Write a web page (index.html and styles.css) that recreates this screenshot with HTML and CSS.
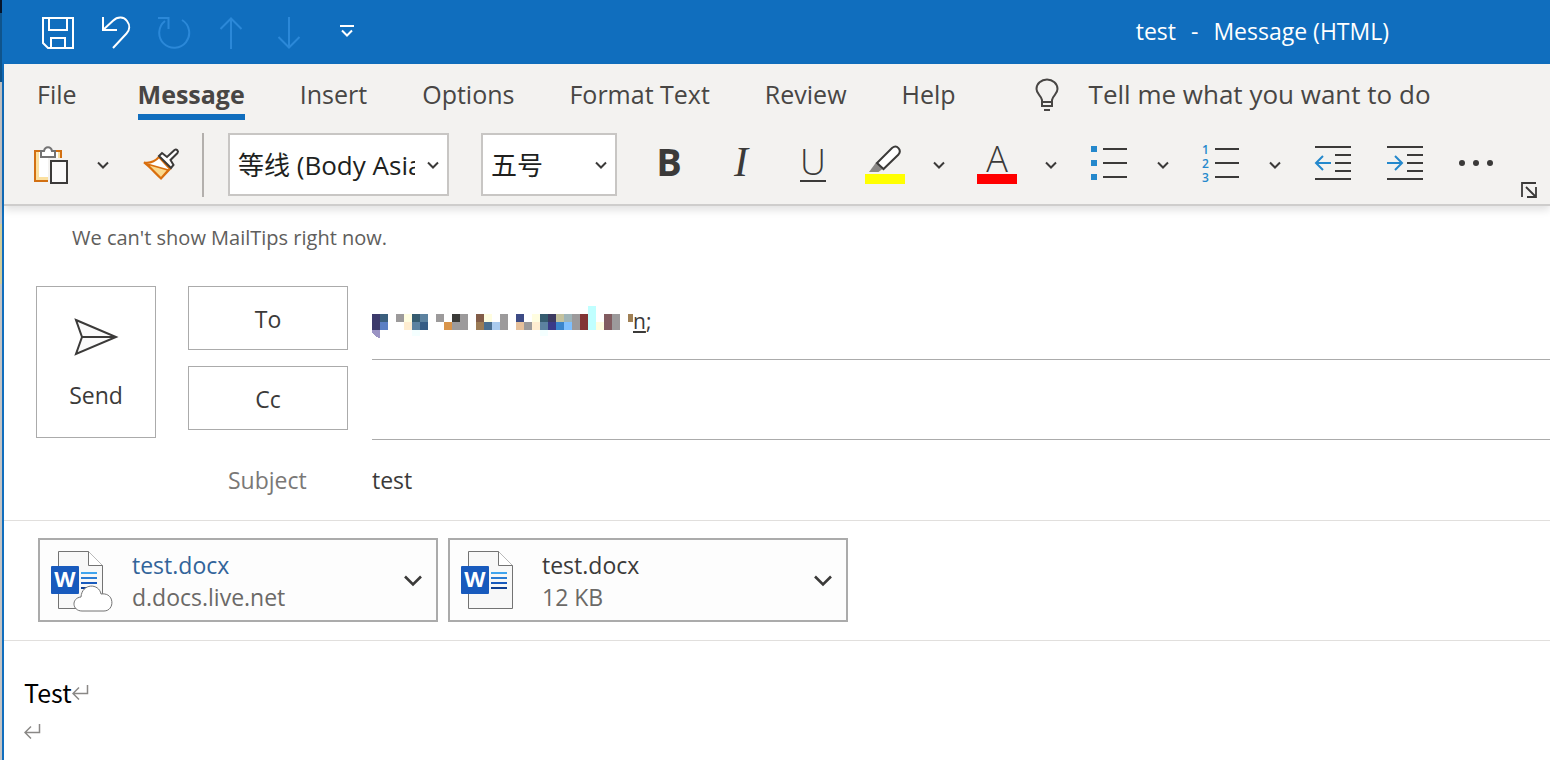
FILE: index.html
```html
<!DOCTYPE html>
<html lang="en">
<head>
<meta charset="utf-8">
<title>test - Message (HTML)</title>
<link rel="stylesheet" href="styles.css">
</head>
<body>
<svg class="defs" aria-hidden="true">
  <symbol id="chevron" viewBox="0 0 12 8"><path d="M1 1.5l5 5 5-5" fill="none" stroke="currentColor" stroke-width="2"/></symbol>
  <symbol id="chevron-lg" viewBox="0 0 18 12"><path d="M1 1.5l8 8 8-8" fill="none" stroke="currentColor" stroke-width="2.6"/></symbol>
  <symbol id="return" viewBox="0 0 17 16"><path d="M15.5 1v8.500H1.500M7 3.500l-6 6 6 6" fill="none" stroke="currentColor" stroke-width="1.500"/></symbol>
  <symbol id="word" viewBox="0 0 62 62">
    <path d="M7.500 1.500h30l14 14v43h-44z" fill="#f8f8f8" stroke="#737373"/>
    <path d="M37.500 1.500v14h14" fill="#fff" stroke="#737373"/>
    <path d="M30 23h16" stroke="#41a5ee" stroke-width="2"/><path d="M30 28h16" stroke="#2b7cd3" stroke-width="2"/><path d="M30 33h16" stroke="#185abd" stroke-width="2"/><path d="M30 38h16" stroke="#103f91" stroke-width="2"/>
    <rect y="16" width="28" height="28" rx="1" fill="#185abd"/>
  </symbol>
</svg>
<div class="screen">
<div class="backdrop"></div>
<div class="window">
  <header class="titlebar">
    <div class="quick">
      <button aria-label="Save"><svg width="34" height="34" viewBox="0 0 34 34"><path d="M2 2h30v30H7l-5-5zM8 2v12h18V2M10 32V22h14v10" class="line"/></svg></button>
      <button aria-label="Undo"><svg width="34" height="34" viewBox="0 0 34 34"><path d="M4 1v13h14M4 14L14 4.800C19 0 25 1 28 5s3 9-.5 12.500L14 32" class="line"/></svg></button>
      <button aria-label="Redo" disabled><svg width="34" height="34" viewBox="0 0 34 34"><path d="M1 2h10.500v11M8 5A15 15 0 1 0 25 4" class="line"/></svg></button>
      <button aria-label="Previous item" disabled><svg width="34" height="34" viewBox="0 0 34 34"><path d="M16 33V2M5.500 13L16 2.500 26.500 13" class="line"/></svg></button>
      <button aria-label="Next item" disabled><svg width="34" height="34" viewBox="0 0 34 34"><path d="M16 1v31M5.500 21L16 31.500 26.500 21" class="line"/></svg></button>
      <button aria-label="Customize quick access"><svg width="34" height="34" viewBox="0 0 34 34"><path d="M9 10h14M11 14.500l5 5 5-5" class="line"/></svg></button>
    </div>
    <h1 class="title"><span>test</span><span>-</span><span>Message (HTML)</span></h1>
  </header>

  <section class="ribbon">
    <nav class="tabs">
      <button class="file-tab">File</button>
      <button class="active">Message</button>
      <button>Insert</button>
      <button>Options</button>
      <button>Format Text</button>
      <button>Review</button>
      <button>Help</button>
      <button class="tell"><svg width="24" height="34" viewBox="0 0 24 34"><path d="M7 25v-3C6 17 1.500 16 1.500 11a10.500 9.500 0 0 1 21 0C22.500 16 18 17 17 22v6H7v-4h10M9 32h6" fill="none" stroke="currentColor" stroke-width="2"/></svg>Tell me what you want to do</button>
    </nav>
    <div class="tools">
      <button class="tool paste" aria-label="Paste"><svg width="40" height="64" viewBox="0 0 40 64"><path d="M4 18h26v30H4z" fill="#fff" stroke="#d27012" stroke-width="2"/><path d="M6.500 19v26.500H19" fill="none" stroke="#fbe0a0" stroke-width="3"/><path d="M28 19v6" stroke="#fbe0a0" stroke-width="2"/><path d="M10 24v-6h3c1-5 7-5 8 0h3v6z" fill="#fff" stroke="#737373" stroke-width="2"/><path d="M20 28h16v22H20z" fill="#fafafa" stroke="#f3f2f0" stroke-width="6"/><path d="M20 28h16v22H20z" fill="#fafafa" stroke="#3b3a39" stroke-width="2"/></svg></button>
      <button class="drop" aria-label="Paste options"><svg width="12" height="8"><use href="#chevron"/></svg></button>
      <button class="tool gap" aria-label="Format painter"><svg width="40" height="64" viewBox="0 0 40 64"><path d="M3 29.500c6 1 11-1 15-5.500l11 12-9 9.500C15 41 9 34 3 29.500z" fill="#fff" stroke="#d96f0e" stroke-width="2"/><path d="M6 31l21 6-7 8z" fill="#fbd98c" stroke="#d96f0e" stroke-width="1.500"/><path d="M18 23l3-3 5 4 7.500-7c2-1.500 4.500 1 3 3L29.500 27l3 5-2.500 3z" fill="#fff" stroke="#3b3a39" stroke-width="2"/></svg></button>
      <span class="separator"></span>
      <label class="combo font"><select aria-label="Font"><option>等线 (Body Asian)</option></select><svg width="12" height="8"><use href="#chevron"/></svg></label>
      <label class="combo size"><select aria-label="Font size"><option>五号</option></select><svg width="12" height="8"><use href="#chevron"/></svg></label>
      <button class="tool letter bold" aria-label="Bold">B</button>
      <button class="tool letter italic" aria-label="Italic">I</button>
      <button class="tool letter under" aria-label="Underline"><span>U</span></button>
      <button class="tool" aria-label="Highlight color"><svg width="40" height="64" viewBox="0 0 40 64"><path d="M4 39l7-9.500 6.500 6.500-4 3z" fill="#8a8886"/><path d="M12 30L27 15c5-4 10 2 6.500 6.500L18.500 36z" fill="#fff" stroke="#3b3a39" stroke-width="2"/><path d="M0 41h40v10H0z" fill="#ff0"/></svg></button>
      <button class="drop" aria-label="Highlight options"><svg width="12" height="8"><use href="#chevron"/></svg></button>
      <button class="tool gap letter color" aria-label="Font color"><span>A</span></button>
      <button class="drop" aria-label="Font color options"><svg width="12" height="8"><use href="#chevron"/></svg></button>
      <button class="tool gap" aria-label="Bullets"><svg width="40" height="64" viewBox="0 0 40 64"><path d="M2 13h6v6H2zM2 27h6v6H2zM2 41h6v6H2z" fill="#2488cc"/><path d="M14 16h24M14 30h24M14 44h24" class="rule"/></svg></button>
      <button class="drop" aria-label="Bullet options"><svg width="12" height="8"><use href="#chevron"/></svg></button>
      <button class="tool gap" aria-label="Numbering"><svg width="40" height="64" viewBox="0 0 40 64"><text x="1" y="21" class="digit">1</text><text x="1" y="35" class="digit">2</text><text x="1" y="49" class="digit">3</text><path d="M14 16h24M14 30h24M14 44h24" class="rule"/></svg></button>
      <button class="drop" aria-label="Numbering options"><svg width="12" height="8"><use href="#chevron"/></svg></button>
      <button class="tool gap" aria-label="Decrease indent"><svg width="40" height="64" viewBox="0 0 40 64"><path d="M2 14h36M22 22h16M22 30h16M22 38h16M2 46h36" class="rule"/><path d="M18 30H3M10 23l-7 7 7 7" class="arrow"/></svg></button>
      <button class="tool" aria-label="Increase indent"><svg width="40" height="64" viewBox="0 0 40 64"><path d="M2 14h36M22 22h16M22 30h16M22 38h16M2 46h36" class="rule"/><path d="M2 30h15M10 23l7 7-7 7" class="arrow"/></svg></button>
      <button class="tool" aria-label="More commands"><svg width="40" height="64" viewBox="0 0 40 64"><g fill="#3b3a39"><circle cx="5" cy="30" r="3"/><circle cx="19" cy="30" r="3"/><circle cx="33" cy="30" r="3"/></g></svg></button>
      <button class="launcher" aria-label="Message dialog"><svg width="16" height="16" viewBox="0 0 16 16"><path d="M1 15V1h14M5 5l9 9M15 5v10H6" fill="none" stroke="#3b3a39" stroke-width="1.800"/></svg></button>
    </div>
  </section>

  <p class="mailtips">We can't show MailTips right now.</p>

  <section class="fields">
    <button class="boxed send"><svg width="46" height="38" viewBox="0 0 46 38"><path d="M3 2l40 17L3 36l6-17zM9 19h34" fill="#fafafa" stroke="#3b3a39" stroke-width="2"/></svg>Send</button>
    <button class="boxed pick">To</button>
    <div class="entry recipients" role="textbox" aria-label="To" tabindex="0">
      <svg width="261" height="32" viewBox="0 0 261 32" shape-rendering="crispEdges">
        <path d="M0 8h8v16H0z" fill="#3c3a6b"/><path d="M8 8h8v8H8z" fill="#3b5f7e"/><path d="M8 16h8v8H8z" fill="#5b7fc4"/><path d="M0 24h8v8C3 31 0 28 0 24z" fill="#9b94c4"/>
        <path d="M24 8h8v8h-8zM64 8h8v8h-8zM80 16h8v8h-8zM88 8h8v16h-8zM128 8h8v16h-8zM152 16h8v8h-8zM200 8h8v16h-8zM240 8h8v16h-8z" fill="#9c9a9b"/>
        <path d="M32 8h8v8h-8zM160 8h8v8h-8zM112 8h8v8h-8zM224 16h8v8h-8z" fill="#fffde0"/><path d="M32 16h8v8h-8zM160 16h8v8h-8z" fill="#ffedd0"/>
        <path d="M40 8h8v8h-8zM168 8h8v8h-8z" fill="#365c70"/><path d="M40 16h8v8h-8zM48 8h8v8h-8zM168 16h8v8h-8z" fill="#5c82a0"/><path d="M48 16h8v8h-8z" fill="#365c85"/>
        <path d="M72 16h8v8h-8z" fill="#d9944a"/><path d="M80 8h8v8h-8z" fill="#3b3b38"/>
        <path d="M104 8h8v8h-8z" fill="#825c48"/><path d="M104 16h8v8h-8z" fill="#9b7b55"/><path d="M112 16h8v8h-8z" fill="#4a6f91"/><path d="M120 16h8v8h-8z" fill="#aacbee"/>
        <path d="M144 8h8v8h-8z" fill="#3d4b85"/><path d="M144 16h8v8h-8z" fill="#e6c09b"/>
        <path d="M176 8h8v8h-8z" fill="#3c3a60"/><path d="M176 16h8v8h-8z" fill="#3a3a88"/><path d="M184 8h8v8h-8z" fill="#c4c29e"/><path d="M184 16h8v8h-8z" fill="#3a85cc"/><path d="M192 8h8v8h-8z" fill="#9eb4b8"/><path d="M192 16h8v8h-8z" fill="#7fc0ff"/>
        <path d="M208 8h8v16h-8z" fill="#823535"/><path d="M216 0h8v24h-8z" fill="#c0ffff"/><path d="M232 8h8v16h-8z" fill="#825c60"/><path d="M256 8h5v8h-5z" fill="#a08055"/>
        <path d="M40 24h8v6h-8zM168 24h8v6h-8z" fill="#f4ffff"/>
      </svg><span class="address"><u>n</u>;</span>
    </div>
    <button class="boxed pick">Cc</button>
    <input class="entry" aria-label="Cc">
    <label class="subject-label" for="subject">Subject</label>
    <input class="subject" id="subject" value="test">
  </section>

  <section class="attachments">
    <article class="card">
      <svg width="62" height="62" viewBox="0 0 62 62"><use href="#word"/><text x="14" y="37" class="word-mark">W</text><path d="M31 61c-10 0-11-13-1-14 1-14 18-14 20-3 14-2 14 17 3 17z" fill="#fff" stroke="#737373"/></svg>
      <div class="info"><a href="#">test.docx</a><span>d.docs.live.net</span></div>
      <button aria-label="Attachment options"><svg width="18" height="12"><use href="#chevron-lg"/></svg></button>
    </article>
    <article class="card">
      <svg width="62" height="62" viewBox="0 0 62 62"><use href="#word"/><text x="14" y="37" class="word-mark">W</text></svg>
      <div class="info"><strong>test.docx</strong><span>12 KB</span></div>
      <button aria-label="Attachment options"><svg width="18" height="12"><use href="#chevron-lg"/></svg></button>
    </article>
  </section>

  <main class="message" contenteditable="true" spellcheck="false" aria-label="Message body">
    <p>Test<svg width="17" height="16"><use href="#return"/></svg></p>
    <p><svg width="17" height="16"><use href="#return"/></svg></p>
  </main>
</div>
</div>
</body>
</html>
```
FILE: styles.css
```css
* { box-sizing: border-box; }
body {
  margin: 0;
  background: #fff;
  color: #3b3a39;
  font-family: "Open Sans", "Noto Sans", "Noto Sans CJK SC", sans-serif;
  font-size: 23px;
}
button, input, select { font: inherit; color: inherit; }
button { padding: 0; border: 0; background: none; }
h1, p { margin: 0; }
svg { display: block; flex: none; }
.defs { position: absolute; width: 0; height: 0; }

.screen { display: flex; min-height: 100vh; overflow: hidden; }
.backdrop {
  flex: none;
  width: 2px;
  background: linear-gradient(#06152c 13px, #0f548c 13px 82px, #c4c4c4 82px 224px, #d3cc9a 224px 284px, #c4c4c4 284px);
}
.window { flex: 1; min-width: 0; border-left: 2px solid #106ebe; }

.titlebar {
  display: flex;
  align-items: center;
  justify-content: space-between;
  height: 64px;
  padding: 0 161px 0 25px;
  background: #106ebe;
  color: #fff;
}
.quick { display: flex; }
.quick button { display: flex; justify-content: center; width: 58px; padding-top: 2px; }
.quick button:disabled { color: #2b88d8; }
.line { fill: none; stroke: currentColor; stroke-width: 2; }
.title { display: flex; gap: 15px; padding-bottom: 2px; font-size: 23px; font-weight: 400; }

.ribbon {
  background: #f3f2f0;
  border-bottom: 2px solid #cecdcc;
  box-shadow: 0 4px 8px rgba(0, 0, 0, 0.12);
}
.tabs { display: flex; gap: 55px; padding-left: 33px; color: #484644; font-size: 25px; }
.tabs button { height: 56px; padding-top: 9px; border-bottom: 6px solid transparent; white-space: nowrap; }
.tabs .file-tab { margin-right: 6px; }
.tabs .active { border-color: #106ebe; font-weight: 700; }
.tabs .tell { display: flex; align-items: center; gap: 30px; margin-left: 24px; font-size: 26px; }
.tell svg { margin-top: 2px; }
.tools { display: flex; align-items: flex-start; padding: 13px 13px 6px; }
.tool { display: flex; flex: none; align-items: center; justify-content: center; width: 72px; height: 64px; }
.paste { width: 68px; }
.drop { display: flex; flex: none; align-items: center; justify-content: center; width: 36px; height: 64px; }
.gap { margin-left: 4px; }
.separator { flex: none; width: 2px; height: 64px; margin: 0 24px 0 5px; background: #b3b0ad; }
.combo { position: relative; flex: none; height: 63px; }
.combo select {
  width: 100%;
  height: 100%;
  padding: 0 32px 0 8px;
  appearance: none;
  border: 2px solid #c8c6c4;
  border-radius: 0;
  background: #fff;
  color: #201f1e;
  font-size: 26px;
}
.combo svg { position: absolute; right: 10px; top: 28px; }
.font { width: 221px; }
.size { width: 136px; margin: 0 16px 0 32px; }
.letter { align-items: flex-start; font-size: 38px; line-height: 60px; }
.bold { font-weight: 700; line-height: 56px; }
.italic { font-family: "Liberation Serif", serif; font-style: italic; font-size: 42px; line-height: 58px; }
.under span { height: 49px; border-bottom: 2px solid #3b3a39; font-size: 36px; line-height: 58px; font-weight: 300; }
.color span { width: 40px; height: 51px; border-bottom: 10px solid #f00; font-size: 36px; font-weight: 300; line-height: 52px; }
.rule { stroke: #3b3a39; stroke-width: 2; }
.arrow { fill: none; stroke: #2488cc; stroke-width: 2; }
.digit { fill: #2488cc; font-size: 12px; font-weight: 600; }
.launcher { margin: 49px 0 0 8px; }

.mailtips { padding: 18px 0 28px 68px; color: #605e5c; font-size: 20px; line-height: 28px; }

.fields {
  display: grid;
  grid-template-columns: 120px 160px 1fr;
  grid-auto-rows: 80px;
  padding-left: 32px;
  border-bottom: 1px solid #e1dfdd;
}
.boxed { border: 1px solid #ababab; background: #fff; }
.send {
  display: flex;
  flex-direction: column;
  grid-row: span 2;
  align-items: center;
  gap: 23px;
  margin: 6px 0 2px;
  padding-top: 31px;
}
.pick { height: 64px; margin: 6px 0 0 32px; padding-top: 2px; width: 160px; }
.entry { min-width: 0; margin-left: 56px; border: 0; border-bottom: 1px solid #ababab; outline: 0; }
.recipients { display: flex; padding-top: 26px; }
.address { font-size: 21px; line-height: 30px; }
.subject-label { grid-column: 2; padding-left: 72px; color: #7a7876; line-height: 80px; }
.subject { min-width: 0; margin-left: 56px; padding: 0; border: 0; outline: 0; }

.attachments { display: flex; gap: 10px; padding: 17px 34px 18px; border-bottom: 1px solid #e1dfdd; }
.card { display: flex; align-items: center; width: 400px; height: 84px; padding: 2px 14px 0 11px; border: 2px solid #ababab; background: #fdfdfd; }
.info { display: flex; flex: 1; flex-direction: column; margin-left: 19px; line-height: 32px; }
.info a { color: #32649a; text-decoration: none; }
.info strong { font-weight: 400; }
.info span { color: #6b6967; }
.word-mark { fill: #fff; font-size: 22px; font-weight: 700; text-anchor: middle; }

.message { padding: 31px 20px 0; outline: 0; color: #000; font-family: "Noto Sans CJK SC", sans-serif; font-size: 25px; }
.message p { display: flex; align-items: center; height: 39px; }
.message svg { color: #8a8886; }
```
